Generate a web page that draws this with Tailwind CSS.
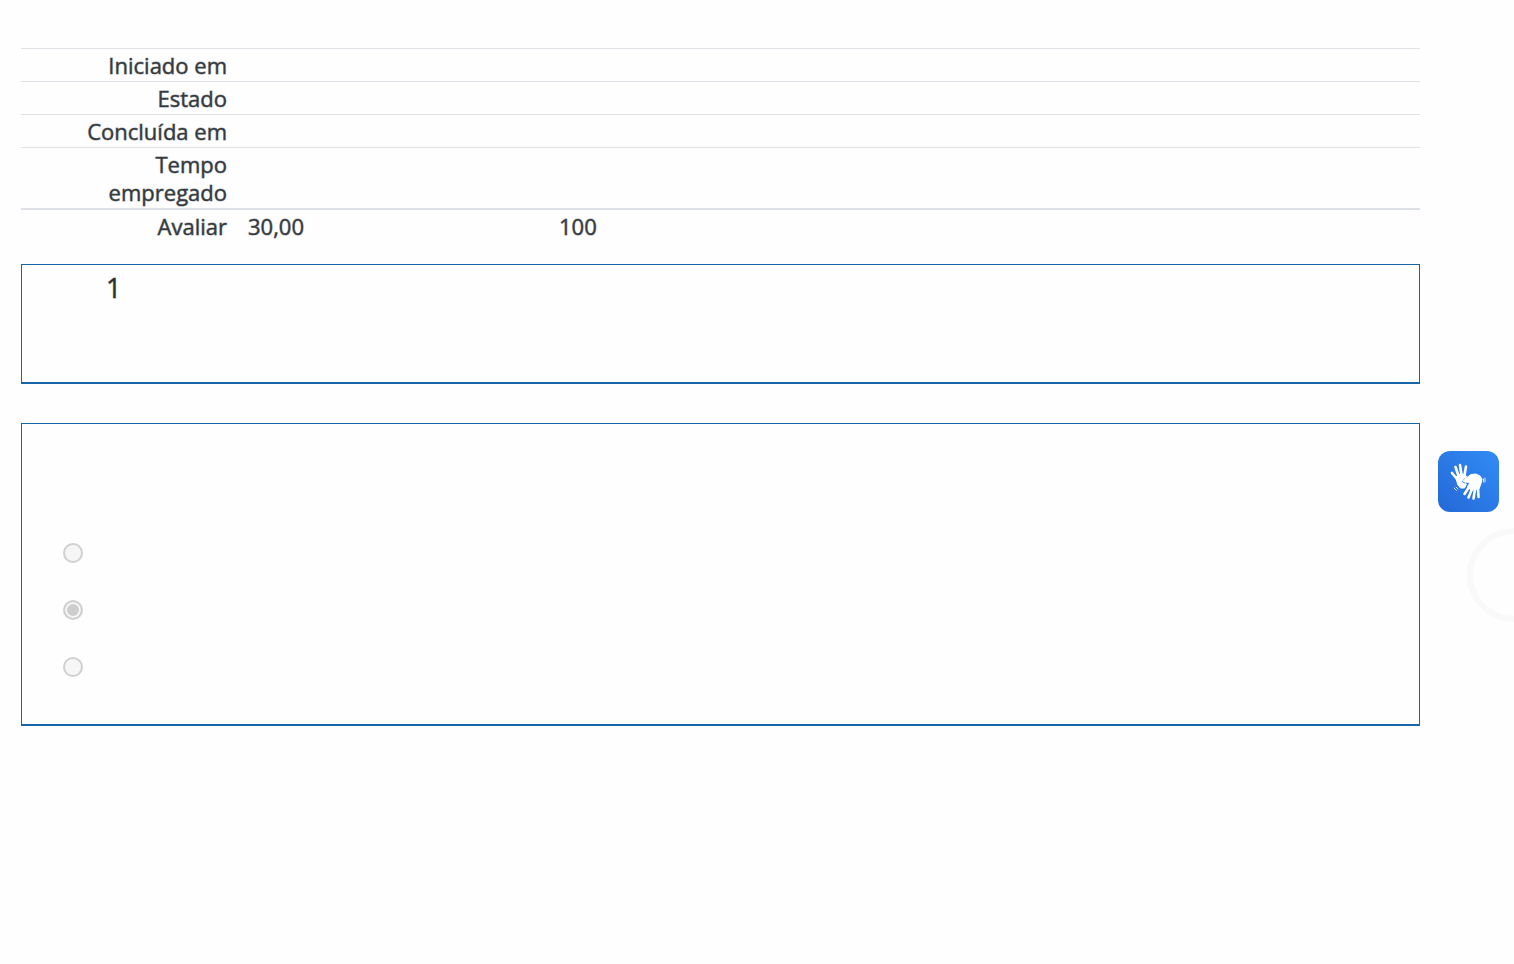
<!DOCTYPE html>
<html lang="pt-BR">
<head>
    <meta charset="UTF-8">
    <meta name="viewport" content="width=device-width, initial-scale=1.0">
    <title>Revisão da tentativa</title>
    <script src="https://cdn.jsdelivr.net/npm/@tailwindcss/browser@4"></script>
</head>
<body class="bg-[#fefefe] font-['Open_Sans',sans-serif] text-[#343a40] min-h-screen overflow-x-hidden">
    <!-- Main Content -->
    <main class="pt-12 pl-[21px] pr-[94px]">
        <!-- Attempt Summary -->
        <table class="w-full table-fixed border-separate border-spacing-0 text-[22px] leading-7 [-webkit-text-stroke:1px_#343a4080]">
            <colgroup>
                <col class="w-[216px]">
                <col>
            </colgroup>
            <tbody>
                <tr>
                    <th scope="row" class="border-t border-[#dee2e6] py-[2px] pr-[10px] text-right align-top font-normal">Iniciado em</th>
                    <td class="border-t border-[#dee2e6]"></td>
                </tr>
                <tr>
                    <th scope="row" class="border-t border-[#dee2e6] py-[2px] pr-[10px] text-right align-top font-normal">Estado</th>
                    <td class="border-t border-[#dee2e6]"></td>
                </tr>
                <tr>
                    <th scope="row" class="border-t border-[#dee2e6] py-[2px] pr-[10px] text-right align-top font-normal">Concluída em</th>
                    <td class="border-t border-[#dee2e6]"></td>
                </tr>
                <tr>
                    <th scope="row" class="border-t border-[#dee2e6] py-[2px] pl-[80px] pr-[10px] text-right align-top font-normal">Tempo empregado</th>
                    <td class="border-t border-[#dee2e6]"></td>
                </tr>
                <tr>
                    <th scope="row" class="border-t-2 border-[#dee2e6] py-[2px] pr-[10px] text-right align-top font-normal">Avaliar</th>
                    <td class="border-t-2 border-[#dee2e6] py-[2px] pl-[11px] align-top">
                        <div class="flex">
                            <span class="w-[311px]">30,00</span>
                            <span>100</span>
                        </div>
                    </td>
                </tr>
            </tbody>
        </table>

        <!-- Question Info -->
        <section class="mt-[22px] h-[120px] border border-b-2 border-[#1565a7] pt-[7px] pl-[84px]">
            <h3 class="text-[27px] leading-8 font-normal text-[#2f2f2f] [-webkit-text-stroke:1px_#2f2f2f80]">1</h3>
        </section>

        <!-- Question Answers -->
        <section class="mt-[39px] border border-b-2 border-[#1565a7] pt-[119px] pb-[47px] pl-[41px]">
            <div class="flex flex-col gap-[37px]">
                <input type="radio" name="answer" value="0" aria-label="Opção 1" disabled class="block size-5 appearance-none rounded-full border-2 border-[#d0d0d0] bg-[#f6f6f6]">
                <input type="radio" name="answer" value="1" aria-label="Opção 2" disabled checked class="block size-5 appearance-none rounded-full border-2 border-[#d0d0d0] bg-[#cecece] shadow-[inset_0_0_0_2px_#f6f6f6]">
                <input type="radio" name="answer" value="2" aria-label="Opção 3" disabled class="block size-5 appearance-none rounded-full border-2 border-[#d0d0d0] bg-[#f6f6f6]">
            </div>
        </section>
    </main>

    <!-- Sign Language Widget -->
    <button type="button" aria-label="Libras" class="fixed top-[451px] right-[15px] size-[61px] rounded-xl bg-linear-to-tr from-[#2468d8] to-[#338cf5]">
        <svg viewBox="0 0 61 61" class="size-full" fill="none" stroke="#fff" stroke-linecap="round" stroke-linejoin="round">
            <!-- left hand -->
            <path d="M19 28 L14 22 M20.500 25 L17.500 16 M23.500 24 L22 14 M26.500 24 L28 15.500" stroke-width="2.600"/>
            <path d="M18 26 L21 23.500 L27 23 L28.500 26 L25 28 L23.500 30.500 L25 32.500 L28.500 33 L26.500 37 L22.500 37 L20 34Z" fill="#fff" stroke-width="1"/>
            <!-- right hand -->
            <path d="M31 36 L26.500 43 M34 38 L30.500 46.500 M37 38 L35.500 47.500 M40 37 L40.500 46" stroke-width="2.600"/>
            <path d="M25 29.500 L29 26.500 L33 23.500 L38 23 L42 25 L44 28 L43 32.500 L41 38 L33 39 L29.500 36 L32 31.500 L26 31Z" fill="#fff" stroke-width="1"/>
            <!-- motion marks -->
            <path d="M45.500 28 V31 M47 27 V31 M16 37 L18.500 39.500 M18 36 L20 38" stroke-width="1" stroke-opacity=".8"/>
        </svg>
    </button>

    <!-- Loading Ring -->
    <div class="fixed top-[528px] right-[-47px] size-[94px] rounded-full border-6 border-[#f9f9f9]"></div>
</body>
</html>
